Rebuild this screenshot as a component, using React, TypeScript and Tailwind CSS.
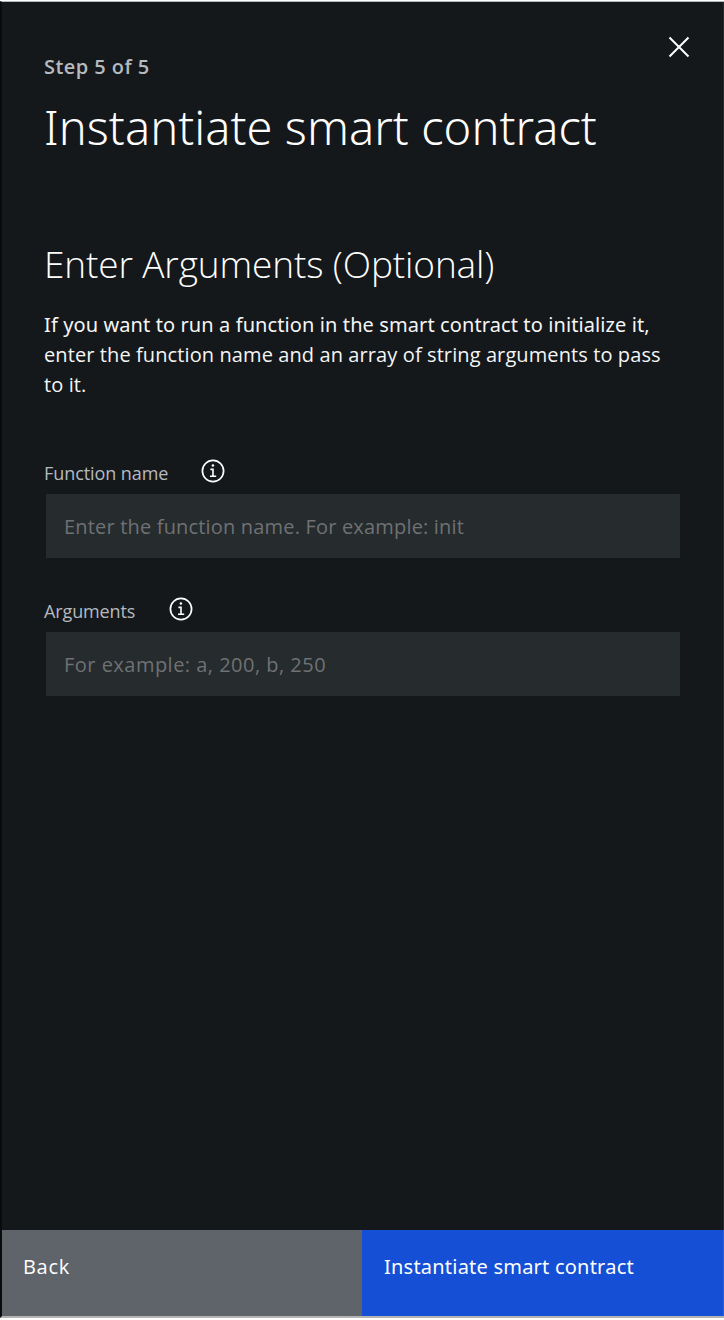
import type { ReactNode } from 'react';

function InfoIcon() {
  return (
    <svg width="24" height="24" viewBox="0 0 24 24" fill="none" stroke="#fff" aria-hidden="true">
      <circle cx="12" cy="12" r="10.6" strokeWidth="1.7" />
      <path d="M9.4 10.4H12V17.2M9 17.2H15.2" strokeWidth="1.6" />
      <circle cx="11.9" cy="6.6" r="1.25" fill="#fff" stroke="none" />
    </svg>
  );
}

function CloseIcon() {
  return (
    <svg width="22" height="22" viewBox="0 0 22 22" fill="none" stroke="#fff" strokeWidth="2" aria-hidden="true">
      <path d="M1.5 1.5L20.5 20.5M20.5 1.5L1.5 20.5" />
    </svg>
  );
}

function Field({ label, placeholder, inputClass }: { label: ReactNode; placeholder: string; inputClass: string }) {
  return (
    <div>
      <div className="flex h-[35px] items-start">
        <label className="pt-[2px] text-[18px] leading-6 text-[#b5babf]">{label}</label>
        <span className="ml-8">
          <InfoIcon />
        </span>
      </div>
      <input
        type="text"
        placeholder={placeholder}
        className={`ml-[2px] block h-16 w-[634px] bg-[#262b2e] px-[18px] text-[20px] text-white outline-none placeholder:text-[#6f7173] placeholder:opacity-100 ${inputClass}`}
      />
    </div>
  );
}

export default function App() {
  return (
    <div className="h-[1320px] w-[724px] bg-white pt-px font-['Open_Sans',sans-serif]">
      <div className="flex h-[1317px] flex-col border-t border-b-2 border-l-2 border-t-[#b4b8ba] border-b-[#b3b3b3] border-l-[#090b0d] bg-[#14181b] text-white">
        <main className="relative flex-1 border-r border-r-[#272b2e] pl-[42px]">
          <button type="button" aria-label="Close" className="absolute top-[34px] right-[33px]">
            <CloseIcon />
          </button>
          <p className="pt-[51px] text-[20px] leading-7 font-semibold tracking-[0.45px] text-[#b5babf]">Step 5 of 5</p>
          <h1 className="mt-[18px] font-['Noto_Sans',sans-serif] text-[47px] leading-[56px] font-light tracking-[0.06px] whitespace-nowrap">
            Instantiate smart contract
          </h1>
          <h2 className="mt-[87px] text-[37px] leading-[44px] font-light tracking-[-0.12px] whitespace-nowrap">
            Enter Arguments (Optional)
          </h2>
          <p className="mt-[24px] text-[20px] leading-[30px] tracking-[0.1px] whitespace-nowrap text-[#f5f5f5]">
            <span className="block font-['Noto_Sans',sans-serif]">
              If you want to run a function in the smart contract to initialize it,
            </span>
            <span className="block">enter the function name and an array of string arguments to pass</span>
            <span className="block">to it.</span>
          </p>
          <div className="mt-[59px] flex flex-col gap-[39px]">
            <Field
              label={<span className="inline-block w-[125px] tracking-[-0.08px] whitespace-nowrap">Function name</span>}
              placeholder="Enter the function name. For example: init"
              inputClass="tracking-[0.18px]"
            />
            <Field
              label={<span className="inline-block w-[93px] tracking-[-0.12px] whitespace-nowrap">Arguments</span>}
              placeholder="For example: a, 200, b, 250"
              inputClass="tracking-[0.48px]"
            />
          </div>
        </main>
        <footer className="flex h-[86px] text-[20px] leading-[30px]">
          <button type="button" className="flex w-[360px] items-start bg-[#5f636a] pt-[22px] pl-[21px] tracking-[0.7px]">
            Back
          </button>
          <button
            type="button"
            className="flex flex-1 items-start border-r border-r-[#2b60d8] bg-[#144fd6] pt-[22px] pl-[22px] font-['Noto_Sans',sans-serif] tracking-[0.22px]"
          >
            Instantiate smart contract
          </button>
        </footer>
      </div>
    </div>
  );
}
